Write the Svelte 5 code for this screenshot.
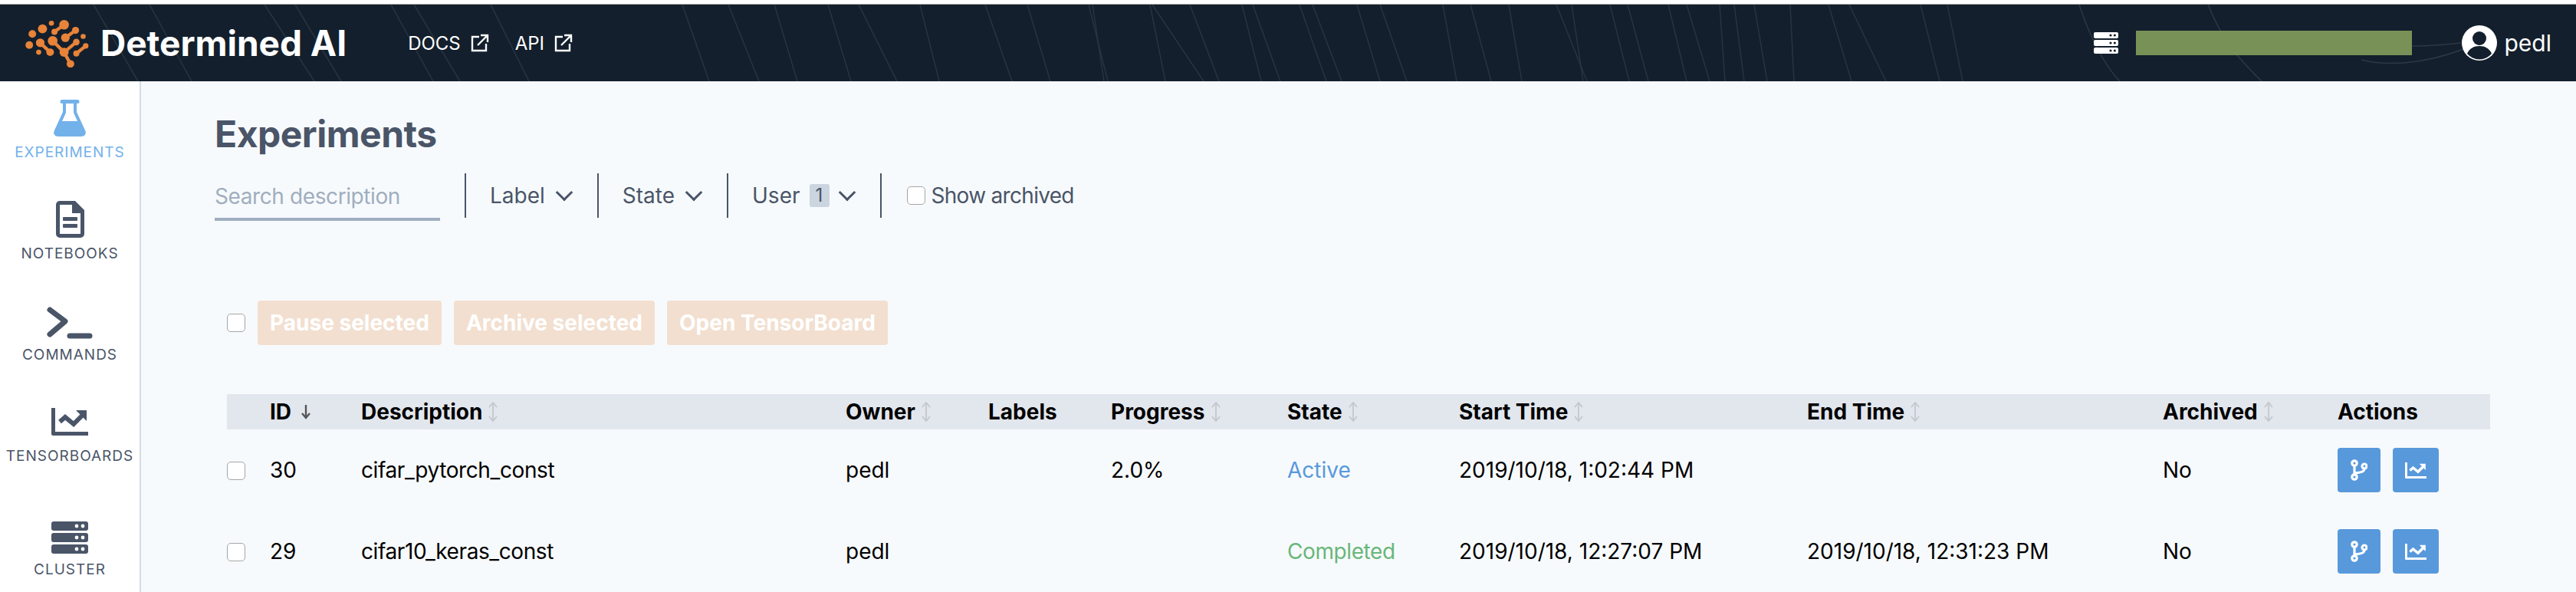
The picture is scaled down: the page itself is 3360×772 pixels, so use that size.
<script lang="ts">
  const navItems = [
    { label: 'EXPERIMENTS', icon: 'flask', active: true },
    { label: 'NOTEBOOKS', icon: 'file' },
    { label: 'COMMANDS', icon: 'terminal' },
    { label: 'TENSORBOARDS', icon: 'chart' },
    { label: 'CLUSTER', icon: 'server' },
  ];

  const columns = [
    { label: 'ID', sort: 'down' },
    { label: 'Description', sort: 'both' },
    { label: 'Owner', sort: 'both' },
    { label: 'Labels' },
    { label: 'Progress', sort: 'both' },
    { label: 'State', sort: 'both' },
    { label: 'Start Time', sort: 'both' },
    { label: 'End Time', sort: 'both' },
    { label: 'Archived', sort: 'both' },
    { label: 'Actions' },
  ];

  const rows = [
    { id: 30, desc: 'cifar_pytorch_const', owner: 'pedl', progress: '2.0%', state: 'Active', start: '2019/10/18, 1:02:44 PM', end: '', archived: 'No' },
    { id: 29, desc: 'cifar10_keras_const', owner: 'pedl', progress: '', state: 'Completed', start: '2019/10/18, 12:27:07 PM', end: '2019/10/18, 12:31:23 PM', archived: 'No' },
  ];

  // background texture of the navbar: [top x, bottom x], near vertical hairlines
  const streaks = [
    [122, 180], [195, 250], [345, 410], [385, 445], [510, 565], [540, 600], [640, 690], [890, 925], [950, 990], [1010, 1040],
    [1080, 1110], [1120, 1170], [1200, 1225], [1285, 1320], [1340, 1370], [1420, 1445], [1425, 1440], [1500, 1520],
    [1503, 1570], [1552, 1590], [1620, 1645], [1634, 1670], [1695, 1730], [1712, 1750], [1770, 1800], [1800, 1835],
    [1882, 1900], [1918, 1945], [1968, 1985], [2030, 2070], [2050, 2065], [2100, 2125], [2123, 2150], [2176, 2200],
    [2200, 2230], [2243, 2250], [2262, 2275], [2288, 2305], [2335, 2340], [2385, 2415], [2412, 2460], [2505, 2530],
    [2540, 2560],
  ];

  const logoDots = [
    [125, 128, 15], [165, 108, 18], [200, 86, 10], [250, 92, 19], [212, 120, 12], [295, 114, 14], [255, 143, 17],
    [325, 138, 10], [113, 172, 15], [156, 163, 17], [195, 200, 15], [205, 155, 19], [250, 200, 18], [150, 200, 10],
    [298, 160, 13], [335, 175, 11], [298, 205, 12], [275, 246, 15],
  ];
  const logoLinks = [
    [250, 92, 212, 120], [295, 114, 255, 143], [156, 163, 195, 200], [205, 155, 250, 200],
    [298, 160, 250, 200], [335, 175, 298, 205], [275, 246, 250, 200],
  ];
</script>

{#snippet serverIcon(cls)}
  <svg class={cls} viewBox="0 0 48 42">
    <rect x="0" y="0" width="48" height="12" rx="3" fill="currentColor" />
    <rect x="0" y="15" width="48" height="12" rx="3" fill="currentColor" />
    <rect x="0" y="30" width="48" height="12" rx="3" fill="currentColor" />
    {#each [6, 21, 36] as y}
      <circle cx="33" cy={y} r="2.4" fill="var(--hole)" />
      <circle cx="41" cy={y} r="2.4" fill="var(--hole)" />
    {/each}
  </svg>
{/snippet}

{#snippet chartIcon(cls)}
  <svg class={cls} viewBox="0 0 48 36">
    <path d="M0 0h5v31h43v5H2a2 2 0 0 1-2-2z" fill="currentColor" />
    <path d="M11 18l7-6 11 9 12-12" fill="none" stroke="currentColor" stroke-width="6" />
    <path d="M32 3h14v14z" fill="currentColor" />
  </svg>
{/snippet}

{#snippet extIcon()}
  <svg class="ext" viewBox="0 0 24 24" fill="none" stroke="currentColor" stroke-width="2.4">
    <path d="M11 4H2v18h18v-9" />
    <path d="M9 15L22 2M13 2h9v9" />
  </svg>
{/snippet}

<div class="page">
  <div class="topstrip"></div>
  <header class="navbar">
    <svg class="streaks" viewBox="0 0 3360 100" preserveAspectRatio="none">
      {#each streaks as [x1, x2]}
        <line {x1} y1="0" {x2} y2="100" />
      {/each}
      <path class="curve" d="M2712 0C2725 40 2745 80 2765 100M2880 0C2900 50 2920 70 2950 100" />
      <path class="curve" d="M3080 72C3120 82 3180 76 3240 46M3146 54C3170 54 3190 52 3210 50" />
    </svg>
    <div class="brand">
      <svg class="logo" viewBox="95 70 255 190">
        {#each logoLinks as [x1, y1, x2, y2]}
          <line {x1} {y1} {x2} {y2} stroke="#e8833a" stroke-width="13" />
        {/each}
        {#each logoDots as [cx, cy, r]}
          <circle {cx} {cy} {r} fill="#e8833a" />
        {/each}
      </svg>
      <span class="wordmark">Determined AI</span>
    </div>
    <nav class="links">
      <span class="link">DOCS {@render extIcon()}</span>
      <span class="link">API {@render extIcon()}</span>
    </nav>
    <div class="status">
      {@render serverIcon('status-server')}
      <div class="meter"></div>
      <svg class="avatar" viewBox="0 0 46 46">
        <circle cx="23" cy="23" r="23" fill="#fff" />
        <circle cx="23" cy="17" r="9" fill="#131f2c" />
        <path d="M7 37c3-7 9-10 16-10s13 3 16 10a21 21 0 0 1-32 0z" fill="#131f2c" />
      </svg>
      <span class="username">pedl</span>
    </div>
  </header>

  <div class="body">
    <aside class="sidebar">
      {#each navItems as item}
        <div class="nav-item" class:active={item.active} class:last={item.icon === 'server'}>
          <div class="nav-icon">
            {#if item.icon === 'flask'}
              <svg class="i-flask" viewBox="0 0 42 48">
                <path fill-rule="evenodd" d="M11 0h20a2 2 0 0 1 0 5h-1v11l11 24c2 4 0 8-5 8H6c-5 0-7-4-5-8l11-24V5h-1a2 2 0 0 1 0-5zM16 5v12l-5 11h20l-5-11V5z" fill="currentColor" />
              </svg>
            {:else if item.icon === 'file'}
              <svg class="i-file" viewBox="0 0 37 48">
                <path fill-rule="evenodd" d="M5 0h20l12 12v31a5 5 0 0 1-5 5H5a5 5 0 0 1-5-5V5a5 5 0 0 1 5-5zM5 5v38h27V16H21V5z" fill="currentColor" />
                <rect x="9" y="21" width="19" height="5" rx="1" fill="currentColor" />
                <rect x="9" y="30" width="19" height="5" rx="1" fill="currentColor" />
              </svg>
            {:else if item.icon === 'terminal'}
              <svg class="i-term" viewBox="0 0 60 42" fill="none" stroke="currentColor" stroke-width="7" stroke-linecap="round" stroke-linejoin="round">
                <path d="M4 4l20 15L4 36" />
                <path d="M30 38h26" />
              </svg>
            {:else if item.icon === 'chart'}
              {@render chartIcon('i-chart')}
            {:else}
              {@render serverIcon('i-server')}
            {/if}
          </div>
          <span class="nav-label">{item.label}</span>
        </div>
      {/each}
    </aside>

    <main class="content">
      <h1>Experiments</h1>
      <div class="filters">
        <div class="search">Search description</div>
        <div class="filter">Label <span class="chev"></span></div>
        <div class="filter">State <span class="chev"></span></div>
        <div class="filter user">User <span class="badge">1</span> <span class="chev"></span></div>
        <label class="archived"><span class="checkbox"></span>Show archived</label>
      </div>

      <div class="bulk">
        <span class="checkbox"></span>
        <div class="bulk-btn">Pause selected</div>
        <div class="bulk-btn">Archive selected</div>
        <div class="bulk-btn">Open TensorBoard</div>
      </div>

      <div class="table">
        <div class="row head">
          <span></span>
          {#each columns as col}
            <span class="th">
              {col.label}
              {#if col.sort === 'down'}
                <svg class="sort-down" viewBox="0 0 14 20" fill="none" stroke="#555" stroke-width="2.4"><path d="M7 1v17M2 12l5 6 5-6" /></svg>
              {:else if col.sort === 'both'}
                <svg class="sort" viewBox="0 0 12 26" fill="none" stroke="#c4c8cd" stroke-width="1.8"><path d="M6 1v24M1 7l5-6 5 6M1 19l5 6 5-6" /></svg>
              {/if}
            </span>
          {/each}
        </div>
        {#each rows as row}
          <div class="row">
            <span class="checkbox"></span>
            <span>{row.id}</span>
            <span class="desc">{row.desc}</span>
            <span>{row.owner}</span>
            <span></span>
            <span>{row.progress}</span>
            <span class:active={row.state === 'Active'} class:completed={row.state === 'Completed'}>{row.state}</span>
            <span>{row.start}</span>
            <span>{row.end}</span>
            <span>{row.archived}</span>
            <span class="actions">
              <span class="action fork">
                <svg viewBox="0 0 22 28" fill="none" stroke="#fff" stroke-width="3.2">
                  <circle cx="5" cy="5" r="3.2" />
                  <circle cx="5" cy="23" r="3.2" />
                  <circle cx="18" cy="9" r="3" />
                  <path d="M5 8v12M6 18c6-1 12-1 12-6" />
                </svg>
              </span>
              <span class="action wide">{@render chartIcon('i-action')}</span>
            </span>
          </div>
        {/each}
      </div>
    </main>
  </div>
</div>

<style>
  :global(body) {
    margin: 0;
    background: #fff;
  }

  .page {
    width: 3360px;
    height: 772px;
    overflow: hidden;
    font-family: Inter, 'Liberation Sans', sans-serif;
    font-size: 28px;
    color: #000;
  }

  .topstrip {
    height: 5px;
    background: #fff;
    border-bottom: 1px solid #a9abad;
  }

  .navbar {
    position: relative;
    height: 100px;
    display: flex;
    align-items: center;
    background: #131f2c;
    color: #fff;
  }

  .streaks {
    position: absolute;
    inset: 0;
    width: 100%;
    height: 100%;
    stroke: #28343f;
    stroke-width: 1.5;
    fill: none;
  }

  .curve {
    stroke: #2c3845;
  }

  .brand,
  .links,
  .status {
    position: relative;
    display: flex;
    align-items: center;
  }

  .brand {
    margin-left: 32px;
    gap: 14px;
  }

  .logo {
    width: 85px;
    height: 63px;
  }

  .wordmark {
    font-size: 46px;
    font-weight: 700;
  }

  .links {
    margin-left: 80px;
    gap: 34px;
    font-size: 24px;
  }

  .link {
    display: flex;
    align-items: center;
    gap: 13px;
  }

  .ext {
    width: 24px;
    height: 24px;
  }

  .status {
    margin-left: auto;
    padding-right: 32px;
    --hole: #131f2c;
  }

  :global(.status-server) {
    width: 32px;
    height: 28px;
  }

  .meter {
    width: 360px;
    height: 32px;
    margin: 0 65px 0 23px;
    background: #779157;
  }

  .avatar {
    width: 46px;
    height: 46px;
  }

  .username {
    margin-left: 10px;
    font-size: 30px;
  }

  .body {
    display: flex;
    height: 666px;
  }

  .sidebar {
    flex: none;
    width: 182px;
    border-right: 2px solid #d3dce6;
    background: #fff;
    color: #4a5568;
    --hole: #fff;
    padding-top: 24px;
    box-sizing: content-box;
  }

  .nav-item {
    height: 132px;
    display: flex;
    flex-direction: column;
    align-items: center;
  }

  .nav-item.last {
    margin-top: 16px;
  }

  .nav-item.active {
    color: #72b1ea;
  }

  .nav-icon {
    height: 48px;
    display: flex;
    align-items: flex-end;
    justify-content: center;
  }

  .i-flask {
    width: 42px;
    height: 48px;
  }

  .i-file {
    width: 37px;
    height: 48px;
  }

  .i-term {
    width: 60px;
    height: 42px;
  }

  :global(.i-chart) {
    width: 48px;
    height: 36px;
    margin-bottom: 6px;
  }

  :global(.i-server) {
    width: 48px;
    height: 42px;
  }

  .nav-label {
    margin-top: 9px;
    font-size: 19px;
    line-height: 24px;
    letter-spacing: 1px;
    white-space: nowrap;
  }

  .content {
    flex: 1;
    background: #f7fafc;
    padding: 0 0 0 96px;
    box-sizing: border-box;
    min-width: 0;
  }

  h1 {
    margin: 40px 0 0;
    font-size: 48px;
    line-height: 58px;
    font-weight: 700;
    color: #4a5568;
    letter-spacing: -0.5px;
  }

  .filters {
    display: flex;
    align-items: stretch;
    height: 62px;
    margin-top: 22px;
    color: #4a5568;
  }

  .search {
    width: 294px;
    height: 62px;
    box-sizing: border-box;
    border-bottom: 4px solid #a0aec0;
    color: #a0aec0;
    line-height: 60px;
    margin-right: 32px;
    letter-spacing: -0.4px;
  }

  .filter {
    display: flex;
    align-items: center;
    height: 58px;
    border-left: 2px solid #4a5568;
    padding: 0 32px 0 31px;
    gap: 14px;
  }

  .filter.user {
    gap: 12px;
  }

  .chev {
    width: 16px;
    height: 16px;
    margin: -8px 3px 0;
    border-right: 3px solid #4a5568;
    border-bottom: 3px solid #4a5568;
    transform: rotate(45deg);
    box-sizing: border-box;
  }

  .filter.user .chev {
    margin-left: 3px;
  }

  .badge {
    width: 26px;
    height: 30px;
    border-radius: 3px;
    background: #cbd5e0;
    text-align: center;
    line-height: 30px;
    font-size: 24px;
  }

  .archived {
    display: flex;
    align-items: center;
    height: 58px;
    border-left: 2px solid #4a5568;
    padding-left: 33px;
    gap: 8px;
    letter-spacing: -0.7px;
  }

  .checkbox {
    display: block;
    width: 24px;
    height: 24px;
    box-sizing: border-box;
    border: 1.5px solid #a5a5a5;
    border-radius: 5px;
    background: #fff;
  }

  .bulk {
    display: flex;
    align-items: center;
    gap: 16px;
    height: 58px;
    margin: 104px 0 0 16px;
  }

  .bulk-btn {
    height: 58px;
    line-height: 58px;
    padding: 0 16px;
    border-radius: 4px;
    background: #f2dfd0;
    color: #fff;
    font-weight: 700;
  }

  .table {
    width: 2952px;
    margin: 64px 0 0 16px;
  }

  .row {
    display: grid;
    grid-template-columns: 56px 119px 632px 186px 160px 230px 224px 454px 464px 228px 199px;
    align-items: center;
    height: 106px;
  }

  .row.head {
    height: 46px;
    background: #e2e6ed;
    font-weight: 700;
  }

  .th {
    display: flex;
    align-items: center;
    gap: 8px;
  }

  .desc {
    letter-spacing: -0.4px;
  }

  .sort-down {
    width: 14px;
    height: 20px;
    margin-left: 4px;
  }

  .sort {
    width: 12px;
    height: 26px;
  }

  .active {
    color: #5899dc;
  }

  .completed {
    color: #68b77a;
    letter-spacing: -0.4px;
  }

  .row .checkbox {
    margin-top: 2px;
  }

  .actions {
    display: flex;
    gap: 16px;
  }

  .action {
    display: flex;
    align-items: center;
    justify-content: center;
    width: 56px;
    height: 58px;
    border-radius: 4px;
    background: #5899dc;
    color: #fff;
  }

  .action.wide {
    width: 60px;
  }

  .action svg {
    width: 22px;
    height: 28px;
  }

  :global(.i-action) {
    width: 28px !important;
    height: 21px !important;
  }
</style>
